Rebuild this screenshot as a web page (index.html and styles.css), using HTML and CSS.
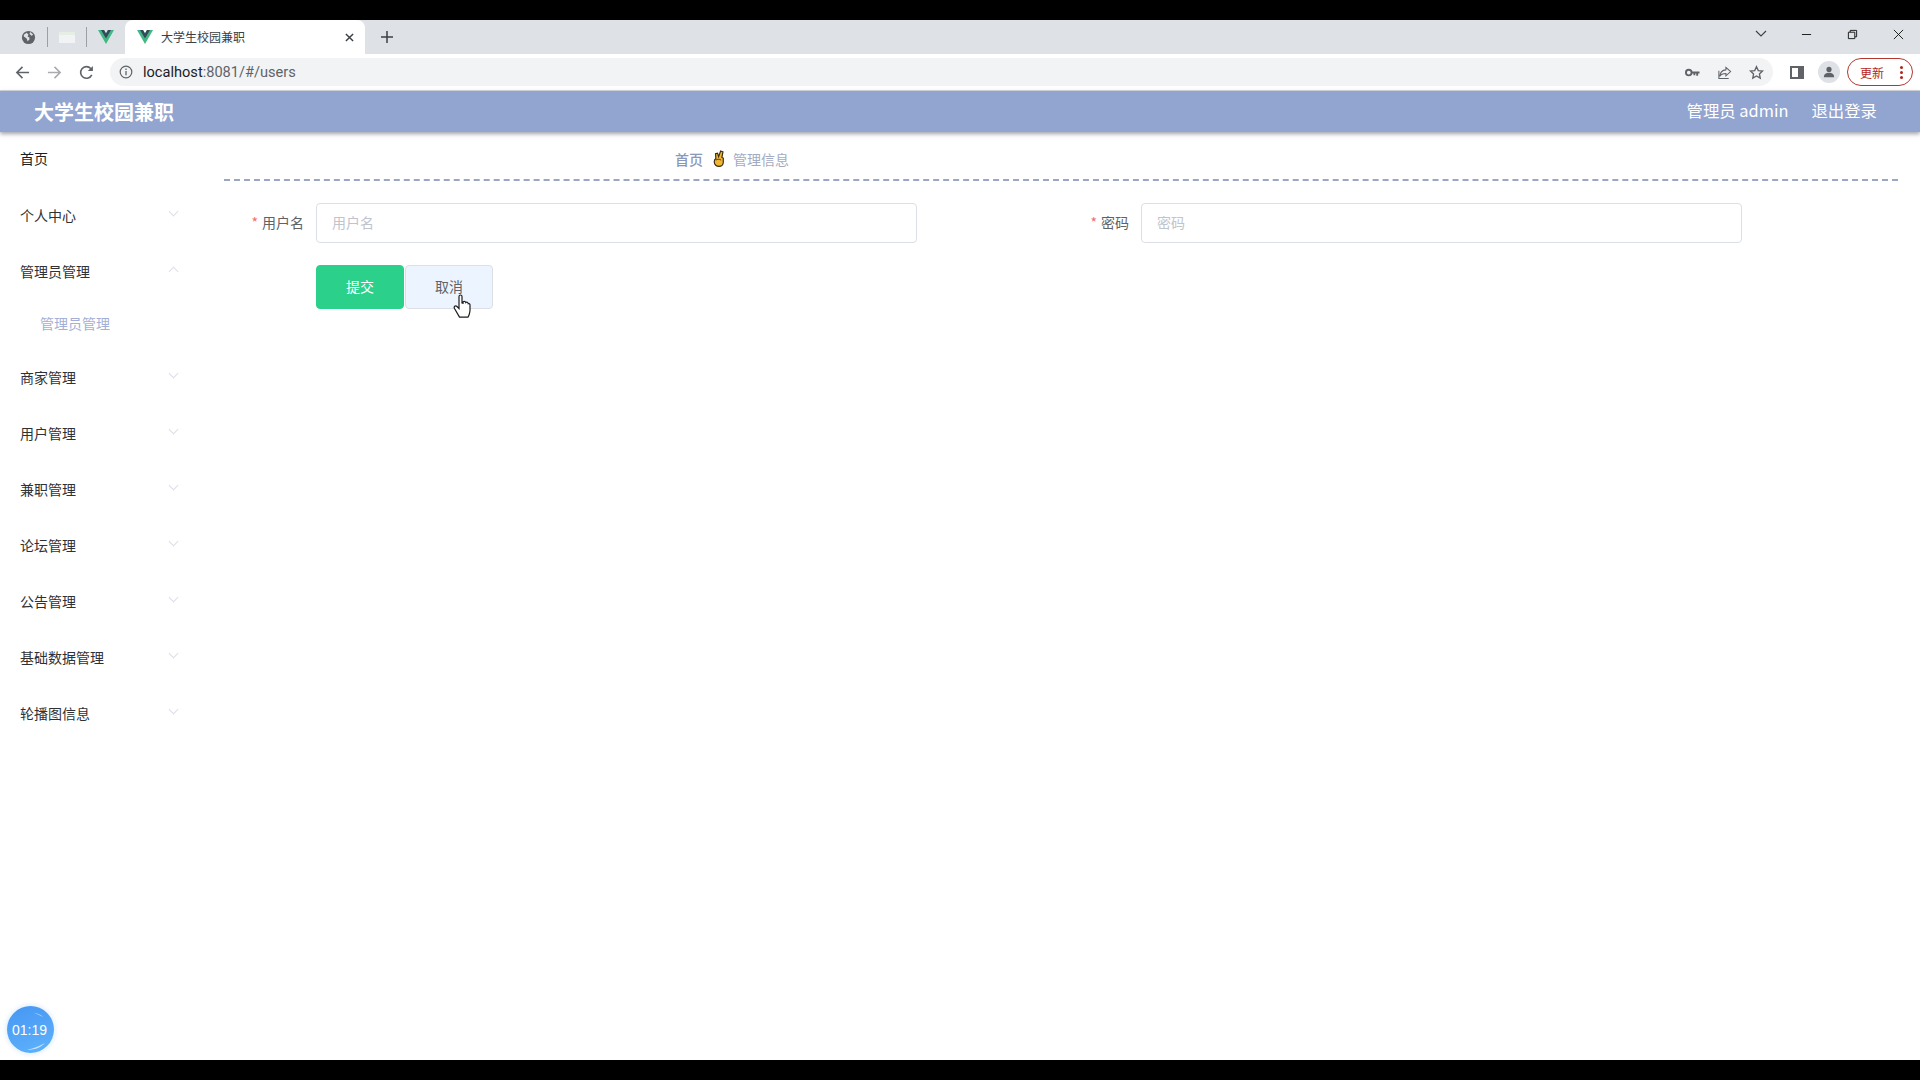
FILE: index.html
```html
<!DOCTYPE html>
<html lang="zh-CN">
<head>
  <meta charset="UTF-8">
  <title>大学生校园兼职</title>
  <link rel="stylesheet" href="styles.css">
</head>
<body>
  <div class="black-bar top"></div>

  <div class="tab-strip">
    <div class="pinned">
      <svg class="pin-icon" viewBox="0 0 16 16"><circle cx="8" cy="8" r="7" fill="#5f6368"/><path d="M3 5l3-2 2 2-1 2 2 1v2l-2 2-1-3-3-2zM10 2l3 3-2 1-2-2z" fill="#dee1e6"/></svg>
      <span class="pin-sep"></span>
      <span class="pin-sheet"></span>
      <span class="pin-sep"></span>
      <svg class="pin-icon vue" viewBox="0 0 16 14"><path d="M0 0h6l2 3.4L10 0h6L8 14z" fill="#41b883"/><path d="M3 0h3l2 3.4L10 0h3L8 8.6z" fill="#35495e"/></svg>
    </div>
    <div class="tab">
      <svg class="pin-icon vue" viewBox="0 0 16 14"><path d="M0 0h6l2 3.4L10 0h6L8 14z" fill="#41b883"/><path d="M3 0h3l2 3.4L10 0h3L8 8.6z" fill="#35495e"/></svg>
      <span class="tab-title">大学生校园兼职</span>
      <svg class="tab-close" viewBox="0 0 10 10"><path d="M1 1l8 8M9 1l-8 8" stroke="#3c4043" stroke-width="1.6"/></svg>
    </div>
    <svg class="new-tab" viewBox="0 0 12 12"><path d="M6 0v12M0 6h12" stroke="#3c4043" stroke-width="1.5"/></svg>
    <div class="window-btns">
      <svg class="tab-list" viewBox="0 0 12 8"><path d="M1 1l5 5 5-5" fill="none" stroke="#3c4043" stroke-width="1.1"/></svg>
      <svg class="win min" viewBox="0 0 12 12"><path d="M1 6h10" stroke="#111" stroke-width="1"/></svg>
      <svg class="win max" viewBox="0 0 12 12"><path d="M1.5 3.5h7v7h-7zM3.5 3.5v-2h7v7h-2" fill="none" stroke="#111" stroke-width="1"/></svg>
      <svg class="win cls" viewBox="0 0 12 12"><path d="M1 1l10 10M11 1L1 11" stroke="#111" stroke-width="1"/></svg>
    </div>
  </div>

  <div class="toolbar">
    <svg class="nav-icon" viewBox="0 0 16 16"><path d="M15 8H2M8 2L2 8l6 6" fill="none" stroke="#5f6368" stroke-width="1.7"/></svg>
    <svg class="nav-icon" viewBox="0 0 16 16"><path d="M1 8h13M8 2l6 6-6 6" fill="none" stroke="#a9abae" stroke-width="1.7"/></svg>
    <svg class="nav-icon" viewBox="0 0 16 16"><path d="M13.6 10.5A6.2 6.2 0 1 1 12.5 3.7L14 5.2" fill="none" stroke="#5f6368" stroke-width="1.7"/><path d="M14.8 1v5.4H9.4z" fill="#5f6368"/></svg>
    <div class="omnibox">
      <svg class="info" viewBox="0 0 14 14"><circle cx="7" cy="7" r="5.8" fill="none" stroke="#5f6368" stroke-width="1.2"/><path d="M7 6v4.2M7 3.6v1.3" stroke="#5f6368" stroke-width="1.3"/></svg>
      <span class="url"><b>localhost</b>:8081/#/users</span>
      <div class="omni-actions">
        <svg class="omni-icon" viewBox="0 0 16 10"><circle cx="4" cy="5" r="3" fill="none" stroke="#5f6368" stroke-width="2"/><path d="M7 4h8.5v2H14v2.5h-2V6h-1v2H9V6H7z" fill="#5f6368"/></svg>
        <svg class="omni-icon" viewBox="0 0 16 16"><path d="M9.5 2.500l5 4.500-5 4.500V9C6 9 4 10 3 12c.3-4 2.500-6.500 6.500-6.800zM2 6v8.500h10.500" fill="none" stroke="#5f6368" stroke-width="1.1"/></svg>
        <svg class="omni-icon" viewBox="0 0 16 16"><path d="M8 1.800l1.900 4.200 4.500.5-3.300 3 .9 4.500L8 11.700 4 14l.9-4.500-3.300-3 4.500-.5z" fill="none" stroke="#5f6368" stroke-width="1.4"/></svg>
      </div>
    </div>
    <span class="side-panel"></span>
    <span class="avatar">
      <svg viewBox="0 0 14 14"><circle cx="7" cy="4" r="3" fill="#5f6368"/><path d="M1 13c0-3.500 3-5 6-5s6 1.500 6 5z" fill="#5f6368"/></svg>
    </span>
    <div class="update-pill"><span>更新</span><i class="dots"></i></div>
  </div>

  <header class="app-header">
    <div class="app-title">大学生校园兼职</div>
    <div class="user-area">
      <span>管理员 admin</span>
      <span>退出登录</span>
    </div>
  </header>

  <div class="app-body">
    <aside class="sidebar">
      <div class="menu-item plain">首页</div>
      <div class="menu-item">个人中心<i class="chev"></i></div>
      <div class="menu-item">管理员管理<i class="chev up"></i></div>
      <div class="menu-sub">管理员管理</div>
      <div class="menu-item">商家管理<i class="chev"></i></div>
      <div class="menu-item">用户管理<i class="chev"></i></div>
      <div class="menu-item">兼职管理<i class="chev"></i></div>
      <div class="menu-item">论坛管理<i class="chev"></i></div>
      <div class="menu-item">公告管理<i class="chev"></i></div>
      <div class="menu-item">基础数据管理<i class="chev"></i></div>
      <div class="menu-item">轮播图信息<i class="chev"></i></div>
    </aside>

    <main class="content">
      <div class="breadcrumb">
        <span class="crumb-home">首页</span>
        <svg class="crumb-sep" viewBox="0 0 12 16"><path d="M8 1l2.200.8-1 5.200 1.300.6v3.900c0 2.300-1.700 3.900-4 3.900s-4.500-1.500-4.500-4.300c0-1.500.6-2.500 1.500-3.100L3.200 3.500l1.900-.5 1 3.200z" fill="#f2b632" stroke="#3a2a10" stroke-width="1.1"/><path d="M3.500 9.500c1.500-1 3.500-1 5 0" fill="none" stroke="#3a2a10" stroke-width=".8"/></svg>
        <span class="crumb-page">管理信息</span>
      </div>

      <form class="form">
        <div class="form-row">
          <div class="form-field">
            <label class="form-label"><em>*</em>用户名</label>
            <input class="form-input" type="text" placeholder="用户名">
          </div>
          <div class="form-field">
            <label class="form-label"><em>*</em>密码</label>
            <input class="form-input" type="text" placeholder="密码">
          </div>
        </div>
        <div class="form-btns">
          <button class="btn btn-submit" type="button">提交</button>
          <button class="btn btn-cancel" type="button">取消</button>
          <svg class="cursor" viewBox="0 0 18 24"><path d="M6 2.500c0-2 3-2 3 0V9l1 .2V8c1.300-1 2.500-.6 2.800.6 1-.8 2.200-.3 2.400 1 .9-.3 1.800.4 1.800 1.500v5c0 3-1.500 6.500-2 7H6.500L1.500 14.500c-1-2 .8-3.500 2.500-2l2 2z" fill="#fff" stroke="#1c1c1c" stroke-width="1.2"/></svg>
        </div>
      </form>
    </main>
  </div>

  <div class="timer">
    01:19
    <svg class="timer-shine" viewBox="0 0 47 47"><path d="M27 7c4 .5 7 2 9 4-3-1.500-6-3-9-4zM20 44c7 0 13-2 18-7-4 2-7 4-18 7z" fill="#fff" fill-opacity=".65"/></svg>
  </div>
  <div class="black-bar bottom"></div>
</body>
</html>
```

FILE: styles.css
```css
* {
  margin: 0;
  padding: 0;
  box-sizing: border-box;
}
body {
  width: 1920px;
  height: 1080px;
  overflow: hidden;
  display: flex;
  flex-direction: column;
  font-family: "Noto Sans CJK SC", "Noto Sans", sans-serif;
  background: #fff;
  color: #333;
}
.black-bar {
  background: #000;
  flex: none;
}
.black-bar.top {
  height: 20px;
}
.black-bar.bottom {
  height: 20px;
}

/* browser chrome */
.tab-strip {
  height: 34px;
  flex: none;
  background: #dee1e6;
  display: flex;
  align-items: center;
}
.pinned {
  width: 125px;
  display: flex;
  align-items: center;
  padding-left: 21px;
}
.pin-icon {
  width: 15px;
  height: 15px;
  flex: none;
}
.pin-icon.vue {
  width: 16px;
  height: 14px;
}
.pin-sep {
  width: 1px;
  height: 20px;
  background: #9aa0a6;
  margin: 0 11px;
}
.pin-sheet {
  width: 16px;
  height: 11px;
  background: #f1f3f4;
  border-top: 3px solid #e6ede2;
}
.tab {
  width: 240px;
  height: 34px;
  background: #fff;
  border-radius: 8px 8px 0 0;
  display: flex;
  align-items: center;
  padding-left: 12px;
}
.tab-title {
  font-size: 12px;
  color: #3c4043;
  margin-left: 8px;
  width: 180px;
  padding-bottom: 2px;
}
.tab-close {
  width: 9px;
  height: 9px;
  margin-left: 4px;
}
.new-tab {
  width: 12px;
  height: 12px;
  margin-left: 16px;
}
.window-btns {
  margin-left: auto;
  display: flex;
  align-items: center;
  height: 34px;
  padding-bottom: 6px;
}
.tab-list {
  width: 12px;
  height: 8px;
  margin-right: 34px;
}
.win {
  width: 11px;
  height: 11px;
}
.win.min {
  margin-right: 35px;
}
.win.max {
  margin-right: 35px;
}
.win.cls {
  margin-right: 16px;
}
.toolbar {
  height: 37px;
  flex: none;
  background: #fff;
  display: flex;
  align-items: center;
  padding-left: 15px;
  border-bottom: 1px solid #d4d7dc;
}
.nav-icon {
  width: 15px;
  height: 15px;
  margin-right: 17px;
}
.omnibox {
  margin-left: -1px;
  width: 1663px;
  height: 28px;
  background: #f1f3f4;
  border-radius: 14px;
  display: flex;
  align-items: center;
  padding-left: 9px;
}
.info {
  width: 14px;
  height: 14px;
}
.url {
  font-family: "Roboto", sans-serif;
  font-size: 14.6px;
  margin-left: 10px;
  color: #5f6368;
}
.url b {
  font-weight: 400;
  color: #202124;
}
.omni-actions {
  margin-left: auto;
  display: flex;
  align-items: center;
  gap: 17px;
  padding-right: 9px;
}
.omni-icon {
  width: 15px;
  height: 15px;
}
.side-panel {
  width: 14px;
  height: 13px;
  border: 2px solid #5f6368;
  border-right-width: 6px;
  margin-left: 17px;
}
.avatar {
  width: 22px;
  height: 22px;
  border-radius: 50%;
  background: #dee1e6;
  margin-left: 14px;
  display: flex;
  align-items: center;
  justify-content: center;
}
.avatar svg {
  width: 12px;
  height: 12px;
}
.update-pill {
  width: 66px;
  height: 28px;
  margin-left: 7px;
  border: 1px solid #b3372f;
  border-radius: 14px;
  display: flex;
  align-items: center;
  justify-content: space-between;
  padding: 0 9px 0 12px;
  font-size: 12px;
  color: #b3261e;
}
.dots {
  width: 3px;
  height: 3px;
  border-radius: 50%;
  background: #b3261e;
  box-shadow: 0 -5px 0 #b3261e, 0 5px 0 #b3261e;
}

/* app */
.app-header {
  height: 41px;
  flex: none;
  background: #92a4d0;
  box-shadow: 0 2px 4px rgba(70, 70, 90, 0.5);
  display: flex;
  align-items: center;
  justify-content: space-between;
  padding: 0 43px 0 34px;
  color: #fff;
  position: relative;
}
.app-title {
  font-size: 20px;
  font-weight: 700;
}
.user-area {
  display: flex;
  gap: 23px;
  font-size: 16.4px;
  padding-bottom: 3px;
}
.app-body {
  flex: 1;
  display: flex;
  min-height: 0;
}
.sidebar {
  width: 224px;
  flex: none;
}
.menu-item {
  height: 56px;
  display: flex;
  align-items: center;
  justify-content: space-between;
  padding: 0 47px 0 20px;
  font-size: 14px;
  color: #303133;
}
.menu-item.plain {
  height: 52px;
  margin-bottom: 3px;
  color: #1d1e20;
}
.menu-sub {
  height: 52px;
  margin-top: -2px;
  display: flex;
  align-items: center;
  padding-left: 40px;
  font-size: 14px;
  color: #a3b0d6;
}
.chev {
  width: 7px;
  height: 7px;
  border-right: 1px solid #dcdfe6;
  border-bottom: 1px solid #dcdfe6;
  transform: translateY(-4px) rotate(45deg);
}
.chev.up {
  transform: translateY(0) rotate(225deg);
}
.content {
  flex: 1;
  padding: 0 22px 0 0;
}
.breadcrumb {
  height: 49px;
  border-bottom: 2px dashed #9ba6c4;
  display: flex;
  align-items: center;
  padding-left: 451px;
  font-size: 14px;
  padding-top: 6px;
}
.crumb-home {
  color: #8b97b8;
  font-weight: 500;
}
.crumb-sep {
  width: 13px;
  height: 17px;
  margin: 0 8px 0 9px;
}
.crumb-page {
  color: #a2abc4;
}
.form {
  padding-top: 22px;
}
.form-row {
  display: flex;
}
.form-field {
  width: 825px;
  display: flex;
  align-items: center;
}
.form-label {
  width: 92px;
  padding: 0 12px 2px 0;
  text-align: right;
  font-size: 14px;
  color: #606266;
}
.form-label em {
  font-style: normal;
  color: #f56c6c;
  margin-right: 4px;
}
.form-input {
  width: 601px;
  height: 40px;
  border: 1px solid #dcdfe6;
  border-radius: 4px;
  padding: 0 15px 2px;
  font-family: inherit;
  font-size: 14px;
  background: #fff;
}
.form-input::placeholder {
  color: #c0c4cc;
}
.form-btns {
  display: flex;
  margin: 22px 0 0 92px;
  position: relative;
}
.btn {
  width: 88px;
  height: 44px;
  border-radius: 4px;
  font-family: inherit;
  font-size: 14px;
  padding-bottom: 2px;
  cursor: pointer;
}
.btn-submit {
  background: #2bd18a;
  border: 1px solid #2bd18a;
  color: #fff;
}
.btn-cancel {
  background: #ecf5ff;
  border: 1px solid #dcdfe6;
  color: #606266;
  margin-left: 1px;
}
.cursor {
  position: absolute;
  left: 137px;
  top: 29px;
  width: 18px;
  height: 24px;
}
.timer {
  position: absolute;
  left: 7px;
  top: 1006px;
  width: 47px;
  height: 47px;
  border-radius: 50%;
  background: linear-gradient(160deg, #4696f3, #5fb3fb);
  box-shadow: 0 0 4px 2px #e6f1fb;
  color: #fff;
  font-family: "Liberation Sans", sans-serif;
  font-size: 14px;
  display: flex;
  align-items: center;
  justify-content: center;
  padding-right: 2px;
}
.timer-shine {
  position: absolute;
  left: 0;
  top: 0;
  width: 47px;
  height: 47px;
}
```
